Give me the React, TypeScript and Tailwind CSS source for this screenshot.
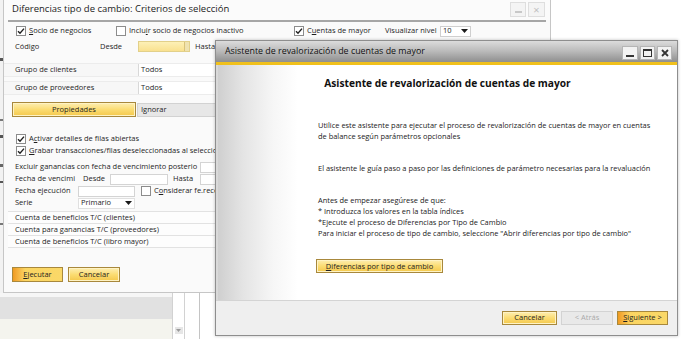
import React from "react";

const YBTN =
  "bg-linear-to-b from-[#fdeeb0] via-[#fbdc72] to-[#f4c84a] border border-[#a8883c] shadow-[inset_0_0_0_1px_#fff3c4]";
const YBTN_DEF =
  "bg-linear-to-r from-[#ef9a1f] via-[#fbd562] via-25% to-[#fad868] border border-[#a8883c]";

function Check({ on }: { on?: boolean }) {
  return (
    <span className="inline-flex w-[10px] h-[10px] border border-[#8c8c8c] bg-white items-center justify-center shrink-0">
      {on && (
        <svg width="8" height="8" viewBox="0 0 8 8">
          <path d="M1 4.2 L3 6.2 L7 1.6" stroke="#1f1f1f" strokeWidth="1.4" fill="none" />
        </svg>
      )}
    </span>
  );
}

function Arrow() {
  return (
    <svg width="7" height="4" viewBox="0 0 7 4">
      <path d="M0 0h7L3.5 4z" fill="#1a1a1a" />
    </svg>
  );
}

function CuentaRow({ text }: { text: string }) {
  return (
    <div className="h-[12px] flex items-center pl-[7px] border-b border-[#e2e2e2] bg-[#fdfdfd] text-[7.5px] whitespace-nowrap">
      {text}
    </div>
  );
}

export default function App() {
  return (
    <div className="relative w-[690px] h-[339px] overflow-hidden bg-white font-['Open_Sans',sans-serif] text-[#1e1e1e] leading-none">
      {/* background desktop, lower left */}
      <div className="absolute left-0 top-[293px] w-[215px] h-[46px] flex">
        <div className="w-[172px] flex flex-col">
          <div className="h-[4px] bg-[#f6f6f6]" />
          <div className="h-[22px] bg-[#e1e1e1]" />
          <div className="flex-1 bg-[#f4f4ee]" />
        </div>
        <div className="w-[13px] border-x border-[#d2d2d2] bg-white flex flex-col justify-end items-center pb-[5px]">
          <div className="w-[8px] h-[7px] bg-[#e6e6e6] flex items-center justify-center">
            <svg width="5" height="3" viewBox="0 0 5 3">
              <path d="M0 0h5L2.5 3z" fill="#9a9a9a" />
            </svg>
          </div>
        </div>
        <div className="w-[15px] bg-white border-r border-[#c4c4c4]" />
        <div className="flex-1 bg-white" />
      </div>

      {/* left edge fragments of app behind */}
      <div className="absolute left-0 top-0 w-[3px] h-[293px] flex flex-col bg-[#f2f2f2]">
        <div className="h-[58px]" />
        <div className="h-[3px] bg-[#555]" />
        <div className="h-[58px]" />
        <div className="h-[2px] bg-[#777]" />
        <div className="h-[14px]" />
        <div className="h-[3px] bg-[#555]" />
        <div className="h-[26px]" />
        <div className="h-[3px] bg-[#666]" />
        <div className="h-[14px]" />
        <div className="h-[2px] bg-[#555]" />
        <div className="h-[40px]" />
        <div className="h-[2px] bg-[#777]" />
      </div>

      {/* back window */}
      <div className="absolute left-[3px] top-0 w-[548px] h-[293px] bg-[#fafafa] border border-[#c6c6c6] border-t-0 flex flex-col">
        <div className="h-[20px] flex items-center justify-between pl-[8px] pr-[5px] bg-[#fbfbfb]">
          <span className="text-[9.5px] text-[#1c1c1c] -mt-[2px]">Diferencias tipo de cambio: Criterios de selección</span>
          <div className="flex gap-[2px] -mt-[2px]">
            <div className="w-[16px] h-[15px] border border-[#dedede] bg-[#f4f4f4] flex items-end justify-center pb-[3px]">
              <div className="w-[7px] h-[2px] bg-[#c8c8c8]" />
            </div>
            <div className="w-[17px] h-[15px] border border-[#dedede] bg-[#f4f4f4] flex items-center justify-center text-[11px] text-[#c0c0c0]">
              ×
            </div>
          </div>
        </div>
        <div className="h-[2px] mx-[4px] bg-[#a6a6a6]" />

        {/* row 1 */}
        <div className="mt-[2px] h-[14px] flex items-center pl-[12px] text-[7.5px] whitespace-nowrap">
          <div className="w-[100px] flex items-center gap-[3px]">
            <Check on />
            <span>
              <u>S</u>ocio de negocios
            </span>
          </div>
          <div className="w-[178px] flex items-center gap-[3px]">
            <Check />
            <span>
              Inclu<u>i</u>r socio de negocios inactivo
            </span>
          </div>
          <div className="w-[91px] flex items-center gap-[3px]">
            <Check on />
            <span>
              C<u>u</u>entas de mayor
            </span>
          </div>
          <div className="w-[55px]">Visualizar nivel</div>
          <div className="w-[31px] h-[11px] border border-[#cfcfcf] bg-white flex items-center justify-between px-[2px]">
            <span>10</span>
            <Arrow />
          </div>
        </div>

        {/* row 2 */}
        <div className="mt-[2px] h-[13px] flex items-center pl-[11px] text-[7.5px] whitespace-nowrap">
          <div className="w-[85px]">Código</div>
          <div className="w-[38px]">Desde</div>
          <div className="w-[52px] h-[11px] flex border border-[#e2d08a] bg-linear-to-b from-[#fdf0b6] to-[#f9e18f]">
            <div className="flex-1" />
            <div className="w-[5px] border-l border-[#d9c27a] bg-[#efe2b0]" />
          </div>
          <div className="ml-[5px]">Hasta</div>
        </div>

        {/* grupo rows */}
        <div className="mt-[10px] h-[14px] flex items-center pl-[11px] text-[7.5px] whitespace-nowrap border-y border-[#ececec] bg-[#f7f7f7]">
          <div className="w-[123px]">Grupo de clientes</div>
          <div className="flex-1 h-[12px] bg-white border-l border-[#d8d8d8] flex items-center pl-[2px]">Todos</div>
        </div>
        <div className="mt-[4px] h-[14px] flex items-center pl-[11px] text-[7.5px] whitespace-nowrap border-y border-[#ececec] bg-[#f7f7f7]">
          <div className="w-[123px]">Grupo de proveedores</div>
          <div className="flex-1 h-[12px] bg-white border-l border-[#d8d8d8] flex items-center pl-[2px]">Todos</div>
        </div>

        {/* propiedades */}
        <div className="mt-[7px] h-[15px] flex items-center pl-[8px] text-[7.5px] whitespace-nowrap">
          <div className={`w-[124px] h-[15px] flex items-center justify-center ${YBTN}`}>Propiedades</div>
          <div className="ml-[1px] flex-1 h-[14px] bg-[#e7e7e7] border border-[#d2d2d2] flex items-center pl-[3px]">
            I<u>g</u>norar
          </div>
        </div>

        {/* checkboxes */}
        <div className="mt-[16px] h-[12px] flex items-center gap-[3px] pl-[12px] text-[7.5px] whitespace-nowrap">
          <Check on />
          <span>
            A<u>c</u>tivar detalles de filas abiertas
          </span>
        </div>
        <div className="h-[12px] flex items-center gap-[3px] pl-[12px] text-[7.5px] whitespace-nowrap">
          <Check on />
          <span>
            <u>G</u>rabar transacciones/filas deseleccionadas al seleccionar
          </span>
        </div>

        {/* excluir */}
        <div className="mt-[4px] h-[12px] flex items-center pl-[11px] text-[7.5px] whitespace-nowrap">
          <div className="w-[185px]">Excluir ganancias con fecha de vencimiento posterio</div>
          <div className="w-[40px] h-[11px] bg-white border border-[#d4d4d4]" />
        </div>
        <div className="h-[12px] flex items-center pl-[11px] text-[7.5px] whitespace-nowrap">
          <div className="w-[68px]">Fecha de vencimi</div>
          <div className="w-[27px]">Desde</div>
          <div className="w-[58px] h-[11px] bg-white border border-[#d4d4d4]" />
          <div className="w-[32px] pl-[5px]">Hasta</div>
          <div className="w-[40px] h-[11px] bg-white border border-[#d4d4d4]" />
        </div>
        <div className="h-[12px] flex items-center pl-[11px] text-[7.5px] whitespace-nowrap">
          <div className="w-[63px]">Fecha ejecución</div>
          <div className="w-[57px] h-[11px] bg-white border border-[#d4d4d4]" />
          <div className="ml-[6px] flex items-center gap-[3px]">
            <Check />
            <span>
              C<u>o</u>nsiderar fe.recepción
            </span>
          </div>
        </div>
        <div className="h-[12px] flex items-center pl-[11px] text-[7.5px] whitespace-nowrap">
          <div className="w-[63px]">Serie</div>
          <div className="w-[57px] h-[11px] bg-white border border-[#e0e0e0] flex items-center justify-between pl-[2px] pr-[2px]">
            <span>Primario</span>
            <Arrow />
          </div>
        </div>

        {/* cuentas */}
        <div className="mt-[2px] mx-[4px] border-t border-[#e2e2e2]">
          <CuentaRow text="Cuenta de beneficios T/C (clientes)" />
          <CuentaRow text="Cuenta para ganancias T/C (proveedores)" />
          <CuentaRow text="Cuenta de beneficios T/C (libro mayor)" />
        </div>

        {/* buttons */}
        <div className="mt-[19px] flex gap-[5px] pl-[8px] text-[7.5px]">
          <div className={`w-[51px] h-[15px] flex items-center justify-center ${YBTN_DEF}`}>
            <span>
              <u>E</u>jecutar
            </span>
          </div>
          <div className={`w-[52px] h-[15px] flex items-center justify-center ${YBTN}`}>Cancelar</div>
        </div>
      </div>

      {/* front window */}
      <div className="absolute left-[215px] top-[40px] w-[463px] h-[296px] border border-[#8e8e8e] bg-[#efefef] flex flex-col shadow-[0_0_3px_rgba(0,0,0,0.25)]">
        <div className="h-[21px] flex items-center justify-between pl-[9px] pr-[5px] bg-linear-to-b from-[#dcdcdc] via-[#b9b9b9] to-[#8f8f8f]">
          <span className="text-[8.9px] text-[#111]">Asistente de revalorización de cuentas de mayor</span>
          <div className="flex gap-[2px] mt-[2px]">
            <div className="w-[16px] h-[14px] bg-[#f2f2f2] border border-[#b5b5b5] flex items-end justify-center pb-[2px]">
              <div className="w-[8px] h-[2px] bg-[#333]" />
            </div>
            <div className="w-[15px] h-[14px] bg-[#f2f2f2] border border-[#b5b5b5] flex items-center justify-center">
              <div className="w-[9px] h-[8px] border border-[#333] border-t-2" />
            </div>
            <div className="w-[15px] h-[14px] bg-[#f2f2f2] border border-[#b5b5b5] flex items-center justify-center">
              <svg width="8" height="8" viewBox="0 0 8 8">
                <path d="M1 1L7 7M7 1L1 7" stroke="#333" strokeWidth="1.8" />
              </svg>
            </div>
          </div>
        </div>
        <div className="h-[3px] bg-[#f0c01c]" />

        {/* content */}
        <div className="h-[235px] flex flex-col border-l-[2px] border-[#d9d9d9] bg-[linear-gradient(to_right,#cfcfcf_0px,#e4e4e4_25px,#f6f6f6_55px,#ffffff_80px)]">
          <div className="mt-[11px] h-[14px] flex items-center justify-center text-[10.2px] font-bold text-[#111]">
            Asistente de revalorización de cuentas de mayor
          </div>
          <div className="pl-[100px] text-[7.45px] leading-[11px] text-[#222]">
            <p className="mt-[30px]">
              Utilice este asistente para ejecutar el proceso de revalorización de cuentas de mayor en cuentas
              <br />
              de balance según parámetros opcionales
            </p>
            <p className="mt-[21px]">
              El asistente le guía paso a paso por las definiciones de parámetro necesarias para la revaluación
            </p>
            <p className="mt-[21px]">
              Antes de empezar asegúrese de que:
              <br />* Introduzca los valores en la tabla índices
              <br />
              *Ejecute el proceso de Diferencias por Tipo de Cambio
              <br />
              Para iniciar el proceso de tipo de cambio, seleccione "Abrir diferencias por tipo de cambio"
            </p>
            <div
              className={`mt-[20px] w-[127px] h-[14px] flex items-center justify-center text-[7.5px] -ml-[2px] ${YBTN}`}
            >
              <span>
                <u>D</u>iferencias por tipo de cambio
              </span>
            </div>
          </div>
        </div>

        {/* footer */}
        <div className="flex-1 border-t border-[#d4d4d4] bg-[#efefef] flex justify-end items-start pt-[10px] pr-[9px] gap-[4px] text-[7.5px]">
          <div className={`w-[55px] h-[14px] flex items-center justify-center ${YBTN}`}>Cancelar</div>
          <div className="w-[52px] h-[14px] flex items-center justify-center bg-[#e9e9e9] border border-[#d3d3d3] text-[#a9a9a9]">
            &lt; Atrás
          </div>
          <div className={`w-[51px] h-[14px] flex items-center justify-center ${YBTN_DEF}`}>
            <span>
              <u>S</u>iguiente &gt;
            </span>
          </div>
        </div>
      </div>
    </div>
  );
}
